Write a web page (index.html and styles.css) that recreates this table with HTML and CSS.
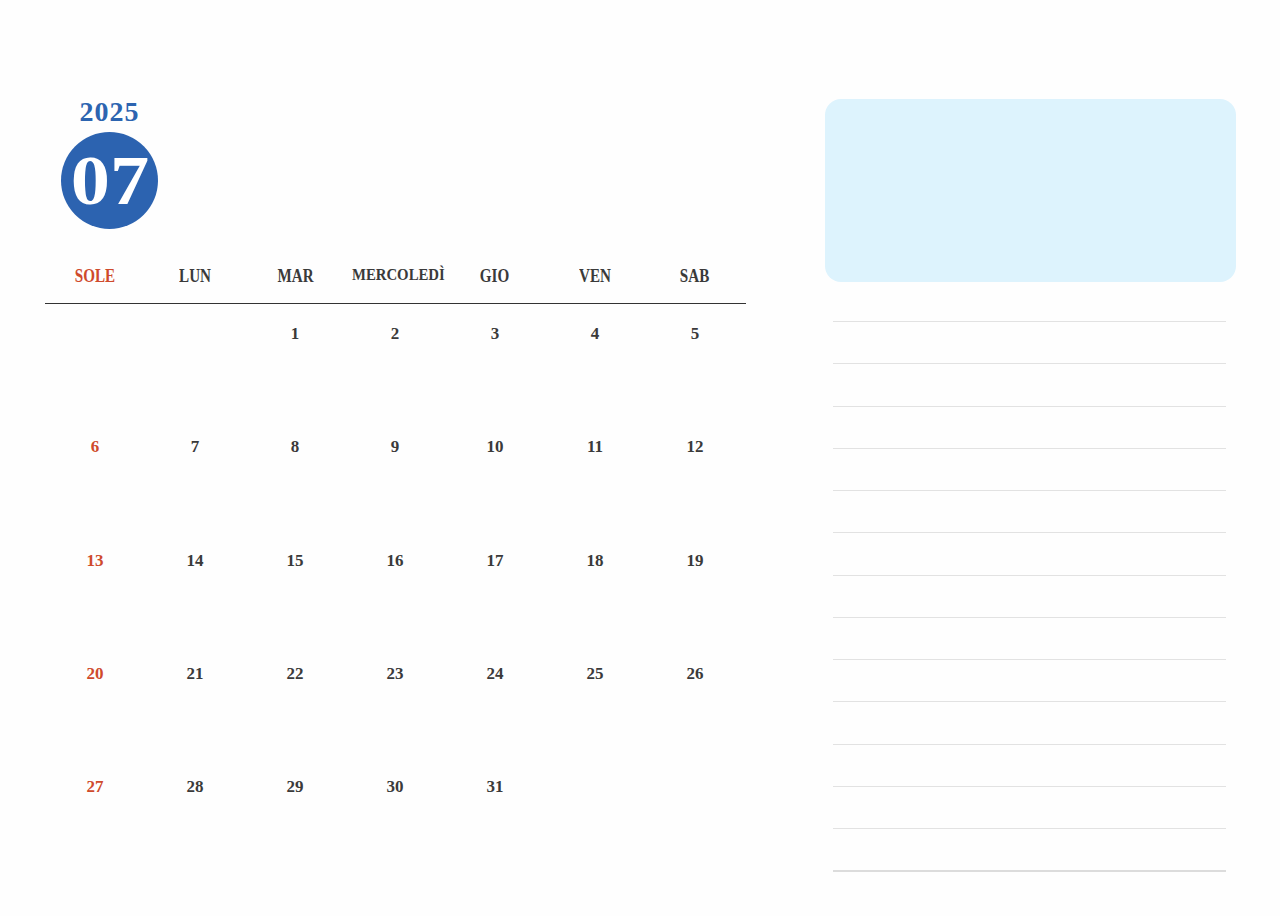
FILE: index.html
```html
<!DOCTYPE html>
<html lang="it">
<head>
<meta charset="utf-8">
<title>Luglio 2025</title>
<link rel="stylesheet" href="styles.css">
</head>
<body>
<div class="page">
  <section class="calendar">
    <div class="month-badge">
      <div class="year">2025</div>
      <div class="month"><span>07</span></div>
    </div>
    <div class="weekdays">
      <div class="wd sun"><span>SOLE</span></div>
      <div class="wd"><span>LUN</span></div>
      <div class="wd"><span>MAR</span></div>
      <div class="wd small"><span>MERCOLEDÌ</span></div>
      <div class="wd"><span>GIO</span></div>
      <div class="wd"><span>VEN</span></div>
      <div class="wd"><span>SAB</span></div>
    </div>
    <div class="days">
      <div class="day"></div><div class="day"></div><div class="day">1</div><div class="day">2</div><div class="day">3</div><div class="day">4</div><div class="day">5</div>
      <div class="day sun">6</div><div class="day">7</div><div class="day">8</div><div class="day">9</div><div class="day">10</div><div class="day">11</div><div class="day">12</div>
      <div class="day sun">13</div><div class="day">14</div><div class="day">15</div><div class="day">16</div><div class="day">17</div><div class="day">18</div><div class="day">19</div>
      <div class="day sun">20</div><div class="day">21</div><div class="day">22</div><div class="day">23</div><div class="day">24</div><div class="day">25</div><div class="day">26</div>
      <div class="day sun">27</div><div class="day">28</div><div class="day">29</div><div class="day">30</div><div class="day">31</div><div class="day"></div><div class="day"></div>
    </div>
  </section>
  <aside class="side">
    <div class="memo"></div>
    <div class="notes">
      <div class="note-line"></div><div class="note-line"></div><div class="note-line"></div><div class="note-line"></div>
      <div class="note-line"></div><div class="note-line"></div><div class="note-line"></div><div class="note-line"></div>
      <div class="note-line"></div><div class="note-line"></div><div class="note-line"></div><div class="note-line"></div>
      <div class="note-line"></div>
      <div class="note-end"></div>
    </div>
  </aside>
</div>
</body>
</html>
```
FILE: styles.css
```css
* { box-sizing: border-box; }
html, body { margin: 0; padding: 0; }
body {
  background: #fefefe;
  font-family: "Liberation Serif", "Times New Roman", serif;
  color: #3a3a3a;
  width: 1280px;
  height: 916px;
  overflow: hidden;
}
.page {
  display: flex;
  padding-left: 45px;
  gap: 79px;
}
.calendar {
  width: 701px;
  padding-top: 97px;
}
.month-badge {
  width: 97px;
  margin-left: 16px;
  display: flex;
  flex-direction: column;
  align-items: center;
}
.year {
  font-weight: bold;
  font-size: 28px;
  line-height: 30px;
  color: #2c64b0;
  letter-spacing: 1px;
}
.month {
  margin-top: 5px;
  width: 97px;
  height: 97px;
  border-radius: 50%;
  background: #2c63b0;
  color: #ffffff;
  font-weight: bold;
  font-size: 70px;
  line-height: 97px;
  text-align: center;
}
.month span {
  display: inline-block;
  transform: scaleX(1.12);
}
.weekdays {
  margin-top: 27px;
  display: grid;
  grid-template-columns: repeat(7, 100px);
  border-bottom: 1.5px solid #333333;
  width: 701px;
}
.wd {
  height: 47px;
  line-height: 40px;
  text-align: center;
  font-weight: bold;
  font-size: 18px;
  color: #3a3a3a;
}
.wd span {
  display: inline-block;
  transform: scaleX(0.84);
}
.wd.small { font-size: 17px; line-height: 38px; }
.wd.small span { transform: scaleX(0.87); }
.wd.sun { color: #cf4a2c; }
.days {
  display: grid;
  grid-template-columns: repeat(7, 100px);
  grid-auto-rows: 113.3px;
}
.day {
  padding-top: 20px;
  line-height: 20px;
  font-size: 17px;
  font-weight: bold;
  text-align: center;
  color: #3a3a3a;
}
.day.sun { color: #cf4a2c; }
.side {
  width: 411px;
  padding-top: 99px;
}
.memo {
  height: 183px;
  background: #ddf3fd;
  border-radius: 16px;
}
.notes {
  margin-top: 39px;
  padding: 0 10px 0 8px;
}
.note-line {
  height: 42.28px;
  border-top: 1.5px solid #e2e2e2;
}
.note-end {
  border-top: 2px solid #dcdcdc;
}
```
